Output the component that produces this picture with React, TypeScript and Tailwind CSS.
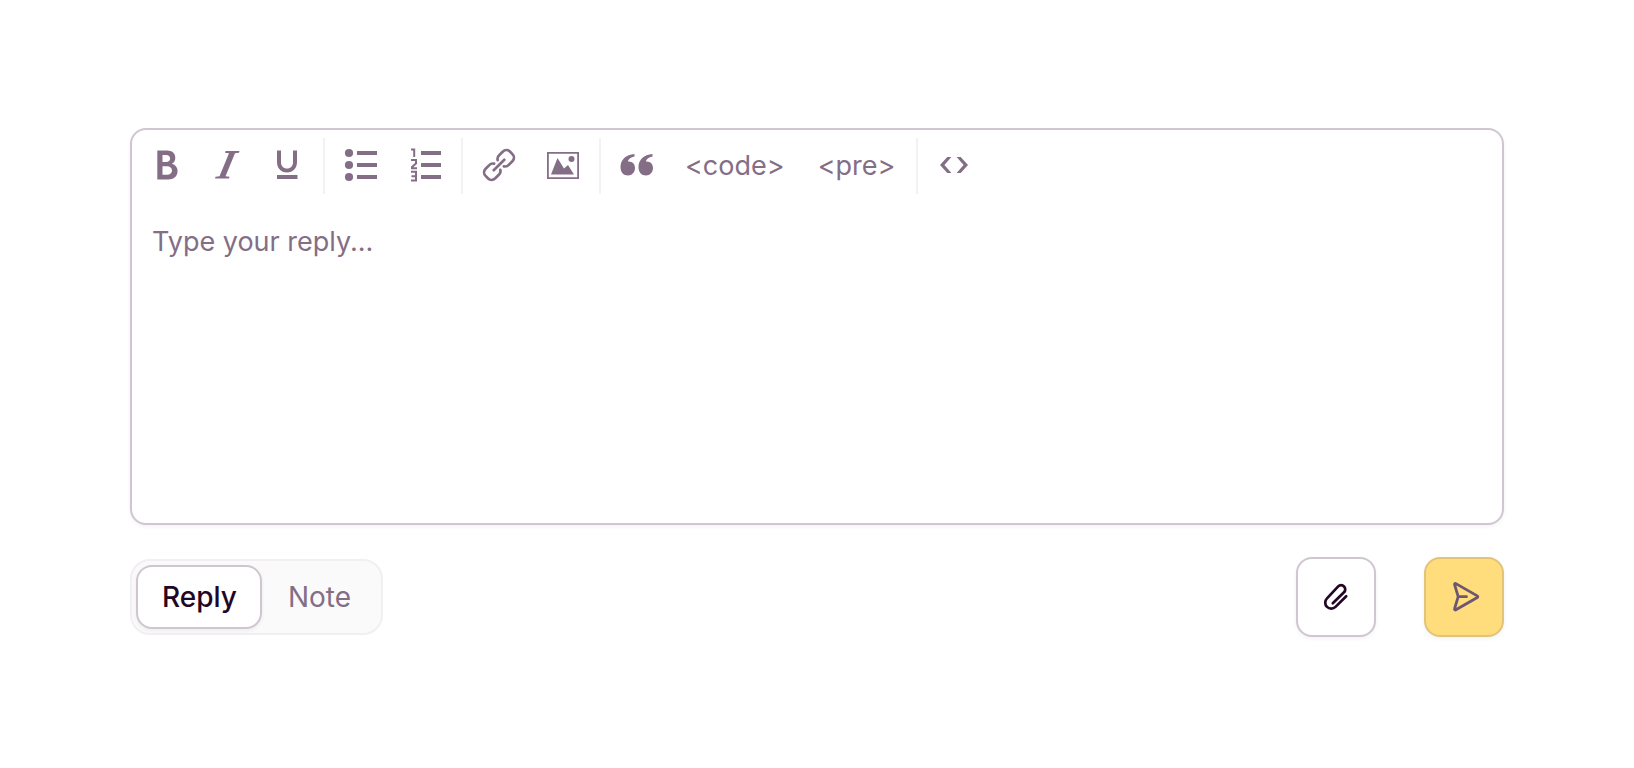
import type { ReactNode } from "react";
import clsx from "clsx";

function Group({ children, first, last }: { children: ReactNode; first?: boolean; last?: boolean }) {
  return (
    <div
      className={clsx(
        "flex h-14 items-center",
        first ? "pl-[5px] pr-1.5" : "px-1",
        !last && "border-r-2 border-[#f3f1f3]"
      )}
    >
      {children}
    </div>
  );
}

function Tool({ label, narrow, children }: { label: string; narrow?: boolean; children: ReactNode }) {
  return (
    <button
      type="button"
      aria-label={label}
      className={clsx("flex h-14 items-center justify-center pb-0.5", narrow ? "w-15" : "w-16")}
    >
      <svg width="36" height="36" viewBox="0 0 36 36" fill="currentColor" aria-hidden="true">
        {children}
      </svg>
    </button>
  );
}

export default function App() {
  return (
    <main className="w-full bg-white px-[130px] py-32 font-['Inter',sans-serif] text-[28px] leading-10 text-[#846e86]">
      <div className="rounded-2xl border-2 border-[#cfc6d0] bg-white shadow-[0_2px_4px_rgba(0,0,0,0.05)]">
        {/* Toolbar */}
        <div className="flex items-center pt-2 text-[27px]">
          <Group first>
            <Tool label="Bold" narrow>
              <path
                fillRule="evenodd"
                d="M8.300 3.500h9.700c5.200 0 8.300 2.800 8.300 7.200 0 2.800-1.200 4.900-3.400 6.100 3.600 1.100 5.700 3.700 5.700 7.200 0 5.100-3.800 8.500-9.600 8.500H8.300zM13.500 8v7h3.600c2.500 0 4-1.300 4-3.500S19.600 8 17.100 8zM13.500 19.300v8.500h4.500c3 0 5-1.500 5-4.200s-2-4.300-5-4.300z"
              />
            </Tool>
            <Tool label="Italic" narrow>
              <path d="M16.500 4h14L30 5.800l-4 .5L16.500 29.200l4 .6-.5 1.700H6l.5-1.700 4-.6L20 6.300l-4-.5z" />
            </Tool>
            <Tool label="Underline" narrow>
              <path d="M8 3.500h4V15c0 4 2.300 6.500 6 6.500s6-2.500 6-6.500V3.500h4V15c0 6.300-3.900 10.500-10 10.500S8 21.300 8 15z" />
              <path d="M8 28h20.500v4H8z" />
            </Tool>
          </Group>
          <Group>
            <Tool label="Bulleted list">
              <circle cx="6" cy="6" r="4.100" />
              <circle cx="6" cy="18" r="4.100" />
              <circle cx="6" cy="30" r="4.100" />
              <path d="M14 4h20v4H14zM14 16h20v4H14zM14 28h20v4H14z" />
            </Tool>
            <Tool label="Numbered list">
              <path d="M14 4h20v4H14zM14 16h20v4H14zM14 28h20v4H14z" />
              <path
                d="M4 2.500H7.200V10M4 13h5v3.600L5 20v1.300h5M4 24.800h5V33.500H4M4.500 29.200h4.500"
                fill="none"
                stroke="currentColor"
                strokeWidth="2"
              />
            </Tool>
          </Group>
          <Group>
            <Tool label="Link">
              <g
                transform="rotate(-45 18 18)"
                fill="none"
                stroke="currentColor"
                strokeWidth="2.700"
                strokeLinecap="round"
              >
                <path d="M15.500 13.600a5 5 0 0 0-4.500-2.400H5.600a5 5 0 0 0-4.800 5v3.600a5 5 0 0 0 4.800 5H11a5 5 0 0 0 4.500-2.400" />
                <path d="M20.500 13.600a5 5 0 0 1 4.500-2.400h5.400a5 5 0 0 1 4.800 5v3.600a5 5 0 0 1-4.800 5H25a5 5 0 0 1-4.500-2.400" />
                <path d="M10.500 18h15" />
              </g>
            </Tool>
            <Tool label="Image">
              <path fillRule="evenodd" d="M2 5h32v27H2zM3.800 6.800v23.400h28.400V6.800z" />
              <path d="M6 27.500 12.500 11l6.500 10.500 4-3.500 6 9.500z" />
              <circle cx="26.500" cy="12" r="3" />
            </Tool>
          </Group>
          <Group>
            <Tool label="Quote">
              <path d="M15.500 7v2.500c-3.700.6-6 2.400-6.700 5.100 4.200-.6 7.200 2.400 7.200 6.400 0 4.300-3 7.500-7 7.500-4.600 0-7.500-3.500-7.500-8.500C1.500 13 6.800 7.600 15.500 7z" />
              <path d="M33.500 7v2.500c-3.700.6-6 2.400-6.700 5.100 4.200-.6 7.200 2.400 7.200 6.400 0 4.300-3 7.500-7 7.500-4.600 0-7.500-3.500-7.500-8.500 0-7 5.300-12.400 14-13z" />
            </Tool>
            <button type="button" className="pl-4 pr-[17px]">&lt;code&gt;</button>
            <button type="button" className="pl-4 pr-[17px]">&lt;pre&gt;</button>
          </Group>
          <Group last>
            <Tool label="View source">
              <path d="M11.300 10h4.100l-7 8 7 8h-4.100L4 18zM20.600 10h4.100L32 18l-7.300 8h-4.100l7-8z" />
            </Tool>
          </Group>
        </div>

        <textarea
          aria-label="Reply"
          placeholder="Type your reply..."
          className="block h-[329px] w-full resize-none px-5 pt-7 text-[27px] outline-none placeholder:text-[#846e86]"
        />
      </div>

      {/* Actions */}
      <div className="mt-8 flex items-center justify-between">
        <div className="flex rounded-[20px] border-2 border-[#f1eff1] bg-[#fafafa] p-1">
          <button
            type="button"
            aria-pressed="true"
            className="h-16 rounded-2xl border-2 border-[#cfc6d0] bg-white pl-6 pr-[23px] font-medium text-[#220624] shadow-[0_2px_4px_rgba(0,0,0,0.05)]"
          >
            Reply
          </button>
          <button type="button" aria-pressed="false" className="h-16 px-6.5">
            Note
          </button>
        </div>

        <div className="flex gap-12">
          <button
            type="button"
            aria-label="Attach file"
            className="flex size-20 items-center justify-center rounded-2xl border-2 border-[#cfc6d0] bg-white text-[#220624] shadow-[0_2px_4px_rgba(0,0,0,0.05)]"
          >
            <svg
              width="32"
              height="32"
              viewBox="0 0 32 32"
              fill="none"
              stroke="currentColor"
              strokeWidth="2.700"
              strokeLinecap="round"
              strokeLinejoin="round"
              aria-hidden="true"
            >
              <path d="M26.200 15.300 15.500 25.900a6 6 0 0 1-8.500-8.500L18.200 5.400a4.100 4.100 0 0 1 5.800 5.900L12.800 22.200" />
            </svg>
          </button>
          <button
            type="button"
            aria-label="Send"
            className="flex size-20 items-center justify-center rounded-2xl border-2 border-[#e2c479] bg-[#ffdd7c] text-[#6d5670] shadow-[0_2px_4px_rgba(0,0,0,0.05)]"
          >
            <svg
              width="32"
              height="32"
              viewBox="0 0 32 32"
              fill="none"
              stroke="currentColor"
              strokeWidth="2.800"
              strokeLinecap="round"
              strokeLinejoin="round"
              aria-hidden="true"
            >
              <path d="M10.200 15.700 6.600 3.700a.9.900 0 0 1 1.300-1.100L29.300 14.900a.9.900 0 0 1 0 1.600L7.900 28.800a.9.900 0 0 1-1.300-1.100zM10.200 15.700h8.300" />
            </svg>
          </button>
        </div>
      </div>
    </main>
  );
}
